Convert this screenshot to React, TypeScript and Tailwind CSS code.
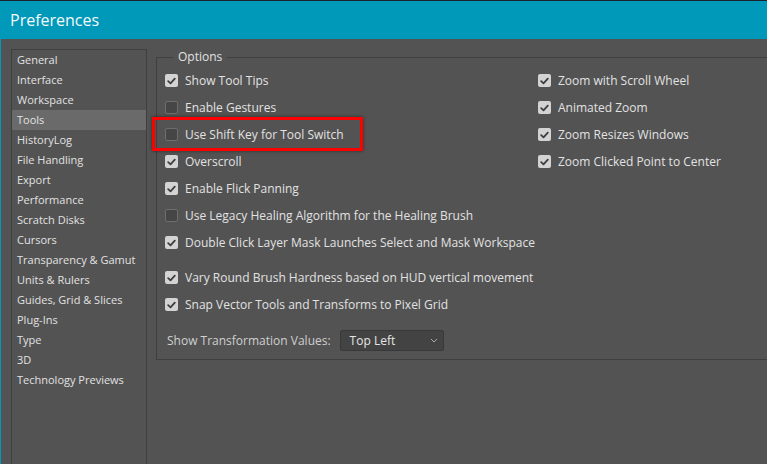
import React from "react";

const leftItems = [
  "General",
  "Interface",
  "Workspace",
  "Tools",
  "HistoryLog",
  "File Handling",
  "Export",
  "Performance",
  "Scratch Disks",
  "Cursors",
  "Transparency & Gamut",
  "Units & Rulers",
  "Guides, Grid & Slices",
  "Plug-Ins",
  "Type",
  "3D",
  "Technology Previews",
];

function Box({ checked }: { checked: boolean }) {
  if (checked) {
    return (
      <div className="w-[13px] h-[13px] rounded-[2px] bg-[#d3d3d3] flex items-center justify-center shrink-0">
        <svg width="9" height="8" viewBox="0 0 9 8">
          <path d="M1.2 4.2 L3.5 6.3 L7.8 1.6" fill="none" stroke="#3e3e3e" strokeWidth="1.8" strokeLinecap="round" strokeLinejoin="round" />
        </svg>
      </div>
    );
  }
  return <div className="w-[13px] h-[13px] rounded-[2px] bg-[#464646] border border-[#6e6e6e] shrink-0" />;
}

function Row({ checked, label, highlight }: { checked: boolean; label: string; highlight?: boolean }) {
  return (
    <div className="relative h-[27px] flex items-center gap-[7px]">
      <Box checked={checked} />
      <span className="text-[12px] text-[#e2e2e2] whitespace-nowrap">{label}</span>
      {highlight && (
        <div className="absolute left-[-13px] top-[-4px] w-[211px] h-[34px] border-[3px] border-[#ff0000] shadow-[0_0_3px_rgba(0,0,0,0.5)]" />
      )}
    </div>
  );
}

export default function App() {
  return (
    <div
      className="w-[767px] h-[464px] overflow-hidden bg-[#535353] flex flex-col"
      style={{ fontFamily: '"Open Sans", "Noto Sans", "Liberation Sans", sans-serif' }}
    >
      <div className="h-[1px] bg-[#1c222c] shrink-0" />
      <div className="h-[38px] bg-[#0199b9] shrink-0 flex items-center pl-[10px] text-[16px] text-[#f4f8fa]">
        Preferences
      </div>
      <div className="flex-1 flex border-l border-[#0199b9]">
        <div className="flex pt-[10px] pl-[10px] gap-[9px]">
          <div className="w-[136px] h-[430px] border border-[#3f3f3f] shrink-0">
            {leftItems.map((it) => (
              <div
                key={it}
                className={
                  "h-[20px] flex items-center pl-[5px] text-[11px] text-[#e2e2e2] whitespace-nowrap " +
                  (it === "Tools" ? "bg-[#6a6a6a]" : "")
                }
              >
                {it}
              </div>
            ))}
          </div>
          <fieldset className="w-[640px] h-[311px] border border-[#3f3f3f] shrink-0 pl-[8px] pt-[2px]">
            <legend className="ml-[8px] px-[5px] text-[12px] leading-[16px] text-[#e2e2e2]">Options</legend>
            <div className="flex">
              <div className="w-[373px] shrink-0">
                <Row checked label="Show Tool Tips" />
                <Row checked={false} label="Enable Gestures" />
                <Row checked={false} label="Use Shift Key for Tool Switch" highlight />
                <Row checked label="Overscroll" />
                <Row checked label="Enable Flick Panning" />
                <Row checked={false} label="Use Legacy Healing Algorithm for the Healing Brush" />
                <Row checked label="Double Click Layer Mask Launches Select and Mask Workspace" />
                <div className="h-[8px]" />
                <Row checked label="Vary Round Brush Hardness based on HUD vertical movement" />
                <Row checked label="Snap Vector Tools and Transforms to Pixel Grid" />
                <div className="h-[12px]" />
                <div className="flex items-center pl-[2px] gap-[9px]">
                  <span className="text-[12px] text-[#cfcfcf] whitespace-nowrap">Show Transformation Values:</span>
                  <div className="w-[104px] h-[21px] rounded-[2px] bg-[#434343] border border-[#393939] flex items-center justify-between pl-[9px] pr-[5px]">
                    <span className="text-[12px] text-[#e6e6e6]">Top Left</span>
                    <svg width="8" height="5" viewBox="0 0 8 5">
                      <path d="M1 1 L4 4 L7 1" fill="none" stroke="#a8a8a8" strokeWidth="1" />
                    </svg>
                  </div>
                </div>
              </div>
              <div>
                <Row checked label="Zoom with Scroll Wheel" />
                <Row checked label="Animated Zoom" />
                <Row checked label="Zoom Resizes Windows" />
                <Row checked label="Zoom Clicked Point to Center" />
              </div>
            </div>
          </fieldset>
        </div>
      </div>
    </div>
  );
}
